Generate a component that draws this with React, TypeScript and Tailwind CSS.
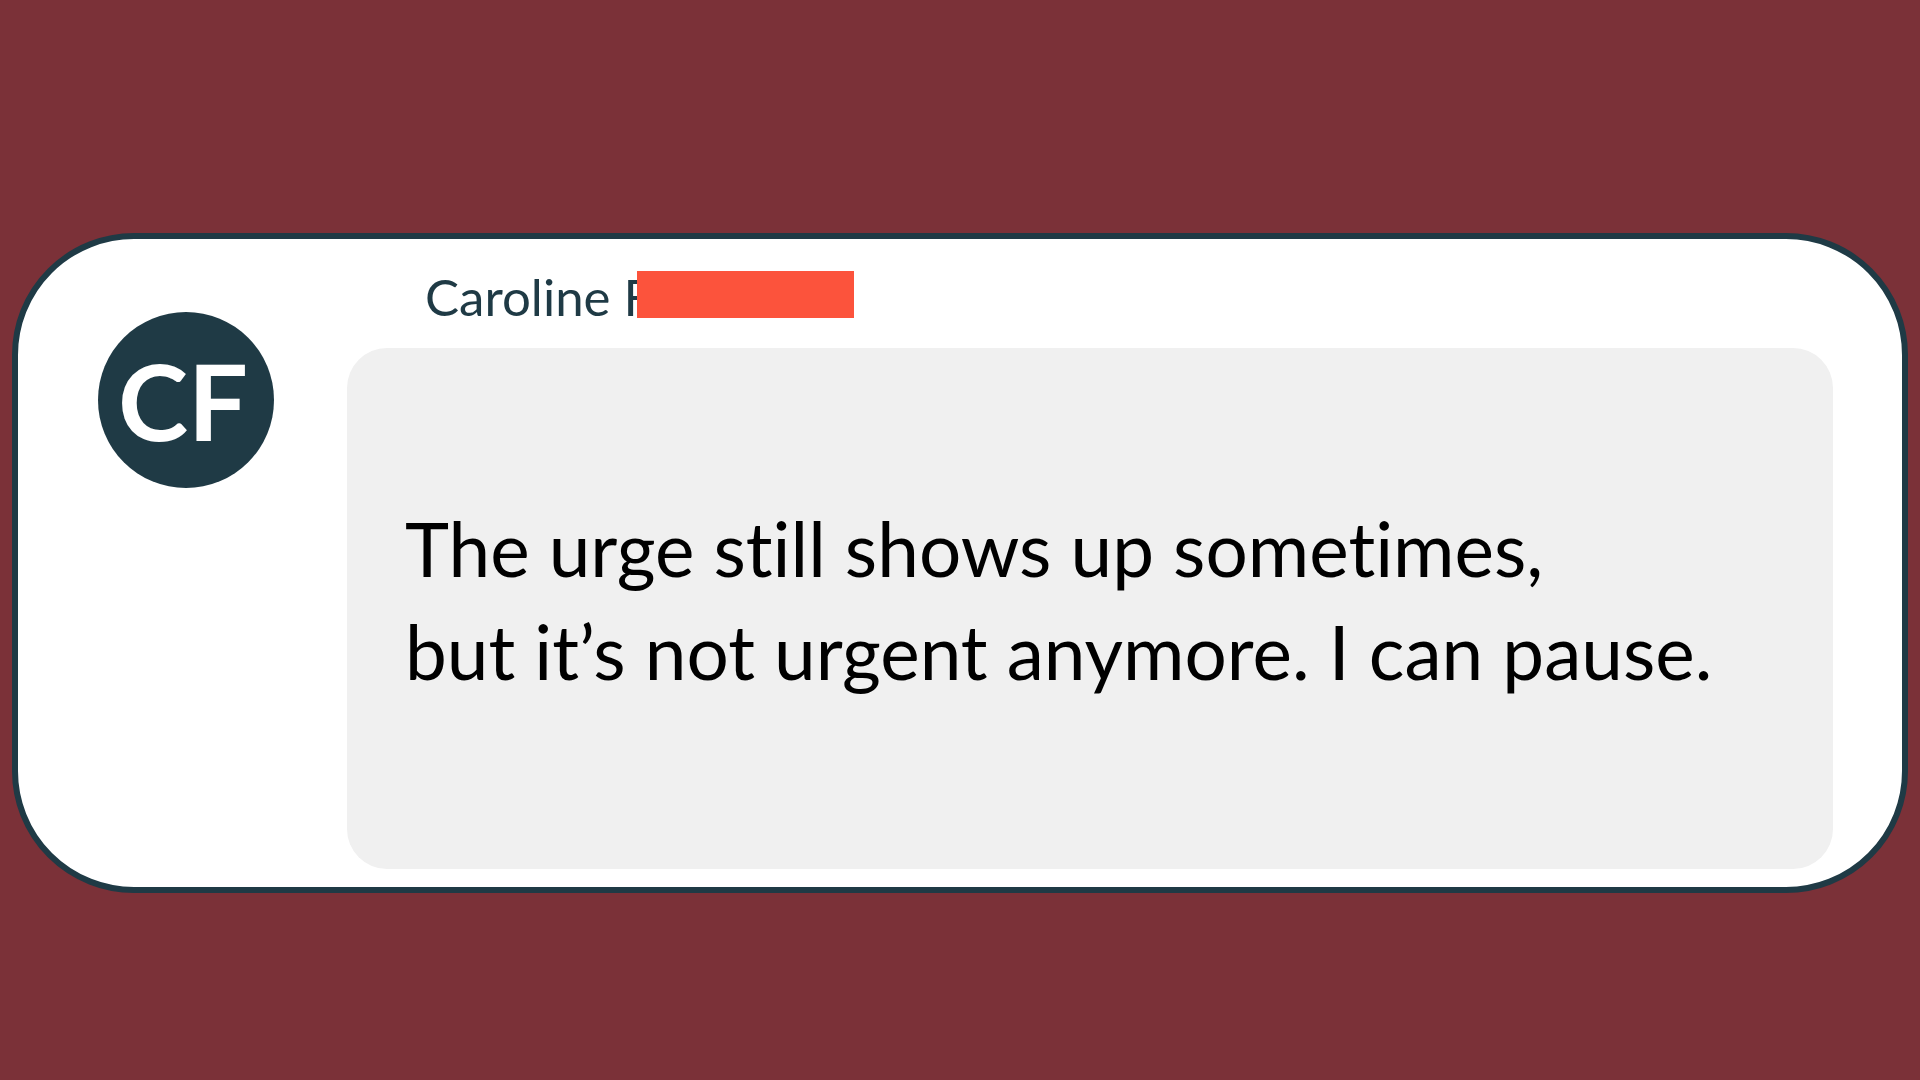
export default function App() {
  return (
    <div className="h-screen w-full bg-[#7b3138] pl-[12px] pt-[233px] font-['Lato','Liberation_Sans',sans-serif] [font-variant-ligatures:none]">
      {/* Quote card */}
      <div className="flex h-[660px] w-[1896px] rounded-[122px] border-[6px] border-[#1f3a45] bg-white pb-[18px] pl-[80px] pr-[69px]">
        {/* Avatar */}
        <div className="mt-[73px] flex h-[176px] w-[176px] shrink-0 items-center justify-center rounded-full bg-[#1f3a45] pr-[6px]">
          <span className="text-[106px] font-bold leading-none text-white">CF</span>
        </div>

        <div className="ml-[73px] flex flex-1 flex-col">
          {/* Author line with redaction */}
          <div className="relative mt-[32px] pl-[78px]">
            <span className="text-[51px] leading-none text-[#1f3a45]">Caroline F</span>
            <div className="absolute left-[290px] top-0 h-[47px] w-[217px] bg-[#fc533c]" />
          </div>

          {/* Message bubble */}
          <div className="mt-[26px] flex-1 rounded-[40px] bg-[#f0f0f0] pl-[58px] pt-[149px]">
            <p className="text-[74.7px] leading-[103px] text-black">
              The urge still shows up sometimes,
              <br />
              but it’s not urgent anymore. I can pause.
            </p>
          </div>
        </div>
      </div>
    </div>
  );
}
